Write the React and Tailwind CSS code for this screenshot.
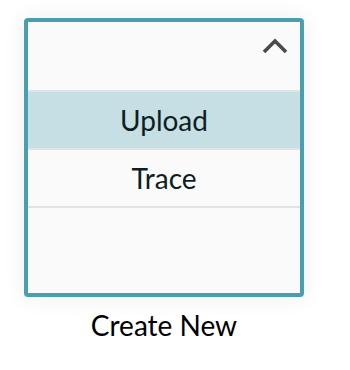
import { useState } from 'react';

const options = ['Upload', 'Trace'];

export default function App() {
  const [selected, setSelected] = useState('Upload');

  return (
    <div className="w-[350px] h-[370px] bg-white pl-[24px] pt-[18px] font-['Lato','Noto_Sans',sans-serif]">
      <div className="w-[280px] flex flex-col items-center">
        {/* Dropdown box */}
        <div className="w-[280px] h-[279px] border-[4px] border-[#4a9fae] rounded-[4px] bg-[#fafafa] shadow-[0_0_24px_rgba(0,0,0,0.07)] flex flex-col">
          <div className="h-[68px] flex justify-end items-start pt-[15px] pr-[12px]">
            <svg width="26" height="17" viewBox="0 0 26 17" fill="none">
              <path d="M2 15 L13 4 L24 15" stroke="#4a4a4a" strokeWidth="3.6" />
            </svg>
          </div>
          <div className="h-[2px] bg-[#e2e2e2]" />
          {options.map(opt => (
            <div key={opt}>
              <button
                onClick={() => setSelected(opt)}
                className={`w-full h-[56px] flex items-center justify-center text-[28px] leading-[32px] text-[#0e1e22] ${selected === opt ? 'bg-[#c5dfe4]' : ''}`}
              >
                {opt}
              </button>
              <div className="h-[2px] bg-[#e2e2e2]" />
            </div>
          ))}
        </div>
        <div className="mt-[12px] text-[28px] leading-[32px] text-black">Create New</div>
      </div>
    </div>
  );
}
